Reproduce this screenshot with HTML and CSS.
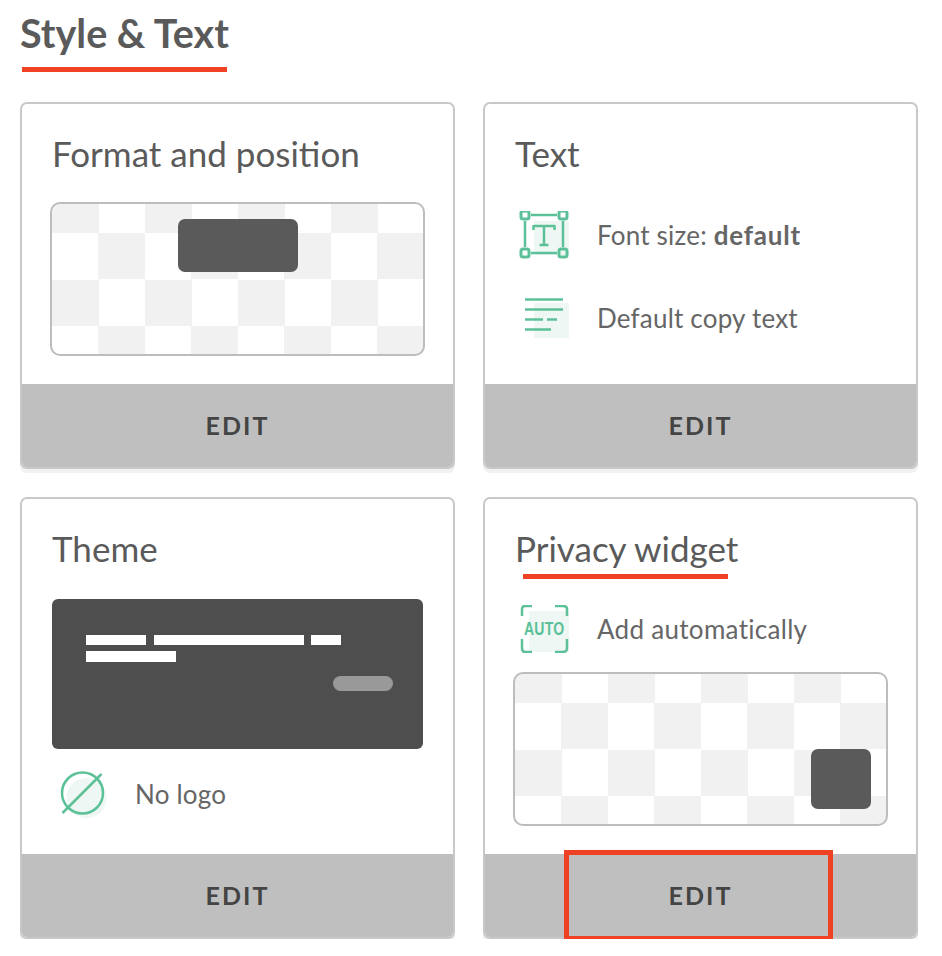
FILE: index.html
```html
<!DOCTYPE html>
<html>
	<head>
		<meta charset="utf-8">
		<title>Style &amp; Text</title>
		<link rel="stylesheet" href="styles.css">
	</head>
	<body>
		<div class="heading">
			<h1>Style &amp; Text</h1>
		</div>
		<div class="cards">
			<div class="card">
				<div class="card-body">
					<h2>Format and position</h2>
					<div class="preview preview-top">
						<div class="banner"></div>
					</div>
				</div>
				<div class="edit">EDIT</div>
			</div>
			<div class="card">
				<div class="card-body">
					<h2>Text</h2>
					<div class="option option-font">
						<svg class="icon" width="52" height="48" viewBox="0 0 52 48">
							<rect class="pale" x="16" y="10" width="35" height="34"/>
							<g class="line">
								<g class="corner">
									<rect x="3" y="0" width="8" height="8" rx="2"/>
									<rect x="41" y="0" width="8" height="8" rx="2"/>
									<rect x="3" y="38" width="8" height="8" rx="2"/>
									<rect x="41" y="38" width="8" height="8" rx="2"/>
								</g>
								<path d="M13 4H39M13 42H39M7 10V36M45 10V36"/>
								<path d="M16 15H37M15.500 14V19M36.500 14V19M26 15V34M21.500 34H30.500"/>
							</g>
						</svg>
						<span>Font size: <b>default</b></span>
					</div>
					<div class="option option-copy">
						<svg class="icon" width="52" height="48" viewBox="0 0 52 48">
							<rect class="pale" x="16" y="9" width="35" height="35"/>
							<path class="line" d="M7 5.500H45M7 15.500H45M7 25.500H25M29 25.500H39M7 35.500H33"/>
						</svg>
						<span>Default copy text</span>
					</div>
				</div>
				<div class="edit">EDIT</div>
			</div>
			<div class="card">
				<div class="card-body">
					<h2>Theme</h2>
					<div class="theme">
						<div class="theme-row">
							<i class="w60"></i><i class="w150"></i><i class="w30"></i>
						</div>
						<div class="theme-row">
							<i class="w90"></i>
						</div>
						<div class="theme-pill"></div>
					</div>
					<div class="option option-logo">
						<svg class="icon-logo" width="52" height="48" viewBox="0 0 52 48">
							<circle class="pale" cx="29.500" cy="28" r="20"/>
							<g class="line">
								<circle cx="25.500" cy="23" r="20.500"/>
								<path d="M5.500 43L44.500 4"/>
							</g>
						</svg>
						<span>No logo</span>
					</div>
				</div>
				<div class="edit">EDIT</div>
			</div>
			<div class="card">
				<div class="card-body">
					<h2>Privacy widget</h2>
					<div class="mark mark-title"></div>
					<div class="option option-auto">
						<svg class="icon" width="52" height="48" viewBox="0 0 52 48">
							<rect class="pale" x="11" y="6" width="40" height="41"/>
							<path class="line" d="M4 11V4Q4 1 7 1H14M37 1H45Q49 1 49 4V11M4 34V43Q4 47 7 47H14M37 47H45Q49 47 49 43V34"/>
							<text class="auto" transform="translate(6 30) scale(.78 1)">AUTO</text>
						</svg>
						<span>Add automatically</span>
					</div>
					<div class="preview preview-corner">
						<div class="widget"></div>
					</div>
				</div>
				<div class="edit">EDIT</div>
				<div class="mark-edit"></div>
			</div>
		</div>
	</body>
</html>
```

FILE: styles.css
```css
*{
	margin: 0;
	padding: 0;
	box-sizing: border-box;
}
body{
	padding: 0 24px 0 20px;
	font-family: "Lato", "Liberation Sans", sans-serif;
	color: #5a5a5a;
	background-color: white;
}
.heading{
	height: 102px;
}
h1{
	width: 205px;
	margin-left: 2px;
	height: 72px;
	padding-top: 10px;
	border-bottom: 5px solid #ef4123;
	font-size: 39.500px;
	line-height: 46px;
	font-weight: 700;
	white-space: nowrap;
	text-indent: -2px;
}
h2{
	font-size: 35px;
	line-height: 40px;
	font-weight: 400;
	padding-left: 2px;
	white-space: nowrap;
}
.cards{
	display: grid;
	grid-template-columns: 435px 435px;
	grid-template-rows: 367px 442px;
	gap: 28px;
}
.card{
	position: relative;
	display: flex;
	flex-direction: column;
	border: 2px solid #c8c8c8;
	border-radius: 7px;
	box-shadow: 0 4px 0 #f1f1f1;
	background-color: white;
}
.card-body{
	flex: 1;
	padding: 29px 28px 0;
}
.edit{
	height: 83px;
	padding-bottom: 2px;
	display: flex;
	align-items: center;
	justify-content: center;
	background-color: #bfbfbf;
	border-radius: 0 0 5px 5px;
	color: #444;
	font-size: 25px;
	font-weight: 700;
	letter-spacing: 2px;
}
.preview{
	display: flex;
	width: 375px;
	height: 154px;
	border: 2px solid #bdbdbd;
	border-radius: 10px;
	background: conic-gradient(#f1f1f1 25%, white 0 50%, #f1f1f1 0 75%, white 0) 0 29px / 93px 93px;
}
.preview-top{
	margin-top: 29px;
	justify-content: center;
	align-items: flex-start;
	padding-top: 15px;
}
.preview-corner{
	margin-top: 19px;
	justify-content: flex-end;
	align-items: flex-end;
	padding: 0 15px 15px 0;
}
.banner{
	width: 120px;
	height: 53px;
	border-radius: 7px;
	background-color: #5a5a5a;
}
.widget{
	width: 60px;
	height: 60px;
	border-radius: 7px;
	background-color: #5a5a5a;
}
.option{
	display: flex;
	align-items: center;
	height: 48px;
	font-size: 26px;
	letter-spacing: 0.200px;
	color: #666;
	margin-left: 5px;
}
.option b{
	font-weight: 700;
	letter-spacing: 0.800px;
}
.icon{
	flex: none;
	margin-right: 27px;
}
.icon-logo{
	flex: none;
	margin-right: 26px;
}
.option-font{
	margin-top: 38px;
}
.option-copy{
	margin-top: 35px;
}
.option-logo{
	margin-top: 21px;
	margin-left: 7px;
}
.option-auto{
	margin-top: 37px;
	letter-spacing: 0.300px;
}
.pale{
	fill: #eef7f3;
}
.line{
	fill: none;
	stroke: #5cc198;
	stroke-width: 2.500;
}
.corner{
	stroke-width: 3;
}
.auto{
	font-family: "Liberation Sans", sans-serif;
	font-size: 18px;
	font-weight: 700;
	fill: #5cc198;
}
.theme{
	display: flex;
	flex-direction: column;
	height: 150px;
	margin: 31px 2px 0;
	padding: 36px 30px 0 34px;
	border-radius: 6px;
	background-color: #4e4e4e;
}
.theme-row{
	display: flex;
	gap: 8px;
	margin-bottom: 6px;
}
.theme-row i{
	display: block;
	height: 10px;
	background-color: white;
}
.theme-row .w90{
	height: 11px;
}
.w60{
	width: 60px;
}
.w150{
	width: 150px;
}
.w30{
	width: 30px;
	margin-left: -1px;
}
.w90{
	width: 90px;
}
.theme-pill{
	align-self: flex-end;
	width: 60px;
	height: 15px;
	margin-top: 8px;
	border-radius: 8px;
	background-color: #999;
}
/* red annotations drawn over the card */
.mark-title{
	position: absolute;
	left: 38px;
	top: 75px;
	width: 205px;
	height: 5px;
	background-color: #ef4123;
}
.mark-edit{
	position: absolute;
	left: 79px;
	bottom: -4px;
	width: 269px;
	height: 91px;
	border: 5px solid #ef4123;
}
```
